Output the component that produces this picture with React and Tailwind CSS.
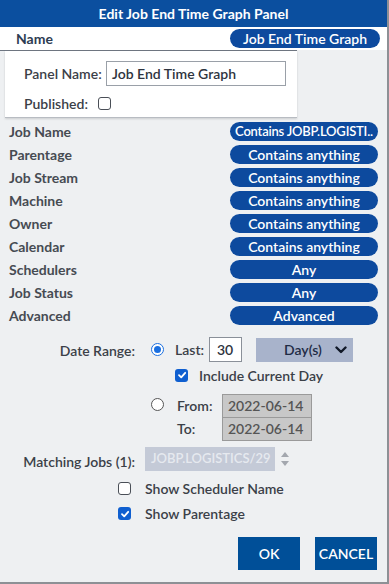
import React from "react";

const rows = [
  ["Job Name", "Contains JOBP.LOGISTI.."],
  ["Parentage", "Contains anything"],
  ["Job Stream", "Contains anything"],
  ["Machine", "Contains anything"],
  ["Owner", "Contains anything"],
  ["Calendar", "Contains anything"],
  ["Schedulers", "Any"],
  ["Job Status", "Any"],
  ["Advanced", "Advanced"],
];

function Check({ checked }) {
  return checked ? (
    <span className="w-[13px] h-[13px] rounded-[3px] bg-[#0f5fd0] flex items-center justify-center shrink-0">
      <svg width="10" height="10" viewBox="0 0 10 10">
        <path d="M2 5.2 L4.2 7.3 L8.2 2.8" fill="none" stroke="white" strokeWidth="1.8" strokeLinecap="round" strokeLinejoin="round" />
      </svg>
    </span>
  ) : (
    <span className="block w-[13px] h-[13px] rounded-[3px] bg-white border border-[#4a4f57] shrink-0" />
  );
}

function Radio({ on }) {
  return on ? (
    <span className="w-[13px] h-[13px] rounded-full border-[1.5px] border-[#1a6fe0] bg-white flex items-center justify-center shrink-0">
      <span className="block w-[7px] h-[7px] rounded-full bg-[#1a6fe0]" />
    </span>
  ) : (
    <span className="block w-[13px] h-[13px] rounded-full border border-[#555] bg-white shrink-0" />
  );
}

export default function App() {
  return (
    <div
      className="w-[389px] h-[584px] bg-[#eef0f2] border-r-2 border-b-2 border-[#8d9095] flex flex-col text-[#3b4048] overflow-hidden"
      style={{ fontFamily: "Lato, 'Noto Sans', sans-serif" }}
    >
      <div className="h-[27px] bg-[#0b4f9f] text-white font-bold text-[14px] flex items-center justify-center shrink-0">
        Edit Job End Time Graph Panel
      </div>
      <div className="h-[23px] bg-white flex items-center pl-4 shrink-0">
        <span className="font-bold text-[14px] text-[#2e3c52]">Name</span>
        <span className="ml-auto mr-[7px] w-[150px] h-[19px] rounded-full bg-[#0d4a9e] text-white text-[14px] font-semibold flex items-center justify-center">
          Job End Time Graph
        </span>
      </div>
      <div className="w-[297px] h-px bg-[#6f7682] shrink-0" />
      <div className="ml-[5px] w-[292px] h-[67px] bg-white border-b border-[#b8bcc2] shadow-[0_1px_2px_rgba(0,0,0,0.15)] flex flex-col pl-[19px] shrink-0">
        <div className="flex items-center mt-[10px] h-[25px]">
          <span className="text-[14px] font-semibold w-[82px]">Panel Name:</span>
          <span className="w-[180px] h-[25px] border border-[#9aa0a8] flex items-center pl-[5px] text-[14px] font-semibold text-[#2e3440]">
            Job End Time Graph
          </span>
        </div>
        <div className="flex items-center mt-[5px] h-[24px]">
          <span className="text-[14px] font-semibold w-[74px]">Published:</span>
          <Check checked={false} />
        </div>
      </div>
      <div className="mt-[2px] flex flex-col shrink-0">
        {rows.map(([l, v], i) => (
          <div key={l} className="h-[23px] flex items-center pl-[9px]">
            <span className="text-[14px] font-bold text-[#464b52]">{l}</span>
            <span
              className={
                i === 0
                  ? "ml-auto mr-[9px] w-[148px] h-[19px] rounded-full bg-[#0d4a9e] text-white text-[13px] tracking-[-0.2px] font-semibold flex items-center justify-center whitespace-nowrap overflow-hidden"
                  : "ml-auto mr-[9px] w-[148px] h-[19px] rounded-full bg-[#0d4a9e] text-white text-[14px] font-semibold flex items-center justify-center whitespace-nowrap overflow-hidden"
              }
            >
              {v}
            </span>
          </div>
        ))}
      </div>
      <div className="mt-[10px] flex shrink-0">
        <div className="w-[145px] pr-[10px] text-right text-[14px] font-semibold pt-[3px]">Date Range:</div>
        <div className="flex flex-col">
          <div className="flex items-center h-[25px]">
            <span className="ml-[6px]"><Radio on /></span>
            <span className="ml-[11px] text-[14px] font-semibold w-[34px]">Last:</span>
            <span className="w-[33px] h-[25px] bg-white border border-[#8a9099] flex items-center pl-[7px] text-[14px] font-semibold text-[#2e3440]">30</span>
            <span className="ml-[14px] w-[97px] h-[24px] bg-[#a8b3cb] flex items-center text-[14px] font-semibold text-[#1f2b45]">
              <span className="ml-[28px]">Day(s)</span>
              <svg className="ml-auto mr-[6px]" width="12" height="8" viewBox="0 0 12 8">
                <path d="M1.5 1.5 L6 6 L10.5 1.5" fill="none" stroke="#111827" strokeWidth="2.4" strokeLinecap="round" strokeLinejoin="round" />
              </svg>
            </span>
          </div>
          <div className="flex items-center h-[26px] ml-[30px]">
            <Check checked />
            <span className="ml-[11px] text-[14px] font-semibold">Include Current Day</span>
          </div>
          <div className="flex mt-[6px]">
            <span className="ml-[6px] mt-[4px]"><Radio on={false} /></span>
            <div className="flex flex-col ml-[13px]">
              <div className="flex items-center h-[23px]">
                <span className="text-[14px] font-semibold w-[45px]">From:</span>
                <span className="w-[90px] h-[24px] bg-[#c8c8c8] border border-[#9a9a9a] flex items-center pl-[5px] text-[14px] font-semibold text-[#555]">2022-06-14</span>
              </div>
              <div className="flex items-center h-[23px]">
                <span className="text-[14px] font-semibold w-[45px]">To:</span>
                <span className="w-[90px] h-[24px] bg-[#c8c8c8] border border-[#9a9a9a] flex items-center pl-[5px] text-[14px] font-semibold text-[#555]">2022-06-14</span>
              </div>
            </div>
          </div>
        </div>
      </div>
      <div className="mt-[7px] flex items-center h-[24px] shrink-0">
        <div className="w-[145px] pr-[10px] text-right text-[14px] font-semibold pt-[5px]">Matching Jobs (1):</div>
        <span className="w-[130px] h-[24px] bg-[#c4cad7] flex items-center pl-[6px] text-[13px] font-semibold text-[#e6e9ef] whitespace-nowrap overflow-hidden">JOBP.LOGISTICS/29</span>
        <svg className="ml-[5px]" width="10" height="18" viewBox="0 0 10 18">
          <path d="M5 2 L9 7 L1 7 Z" fill="#a3a7ae" />
          <path d="M5 16 L9 11 L1 11 Z" fill="#a3a7ae" />
        </svg>
      </div>
      <div className="flex items-center h-[25px] mt-[5px] ml-[118px] shrink-0">
        <Check checked={false} />
        <span className="ml-[14px] text-[14px] font-semibold">Show Scheduler Name</span>
      </div>
      <div className="flex items-center h-[25px] ml-[118px] shrink-0">
        <Check checked />
        <span className="ml-[14px] text-[14px] font-semibold">Show Parentage</span>
      </div>
      <div className="flex justify-end gap-[15px] mt-[11px] mr-[10px] shrink-0">
        <button className="w-[62px] h-[33px] bg-[#004f98] text-white text-[14px] font-semibold">OK</button>
        <button className="w-[62px] h-[33px] bg-[#004f98] text-white text-[14px] font-semibold">CANCEL</button>
      </div>
    </div>
  );
}
